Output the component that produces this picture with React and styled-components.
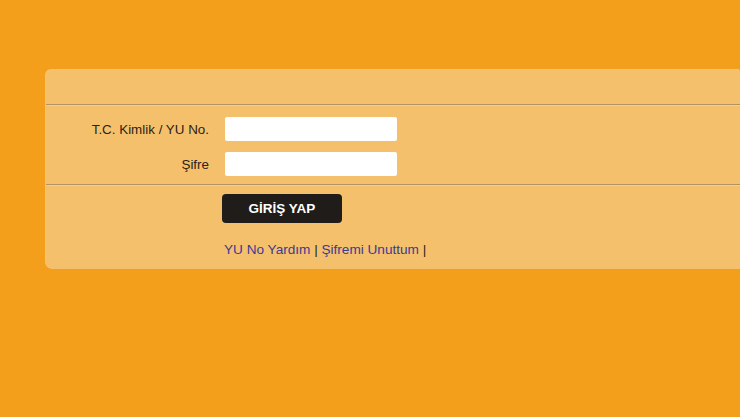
import { createGlobalStyle, styled } from "styled-components";

const GlobalStyle = createGlobalStyle`
  html, body {
    margin: 0;
    padding: 0;
    background: #f39f1b;
    font-family: "Liberation Sans", Arial, sans-serif;
  }
  body {
    height: 417px;
    overflow: hidden;
  }
`;

const Page = styled.div`
  padding: 70px 0 0 46px;
`;

const Panel = styled.div`
  background: #f5c06c;
  border-radius: 6px 0 0 6px;
  box-shadow: -1px -1px 0 rgba(255, 220, 150, 0.6);
  height: 199px;
  display: flex;
  flex-direction: column;
`;

const Header = styled.div`
  height: 34px;
  border-bottom: 1px solid #b39164;
  box-shadow: 0 1px 0 #f8cf8a;
`;

const Fields = styled.div`
  display: grid;
  grid-template-columns: 163px 172px;
  column-gap: 16px;
  row-gap: 11px;
  align-items: center;
  padding: 12px 0 8px;
  border-bottom: 1px solid #b39164;
  box-shadow: 0 1px 0 #f8cf8a;
`;

const Label = styled.label`
  text-align: right;
  font-size: 13.4px;
  color: #2b2218;
`;

const Input = styled.input`
  box-sizing: border-box;
  width: 172px;
  height: 24px;
  border: none;
  border-radius: 2px;
  background: #fff;
  outline: none;
`;

const Actions = styled.div`
  padding: 9px 0 0 176px;
  display: flex;
  flex-direction: column;
  align-items: flex-start;
`;

const SubmitButton = styled.button`
  width: 120px;
  height: 29px;
  border: none;
  border-radius: 4px;
  background: #1f1c1a;
  color: #fff;
  font-family: "Liberation Sans", Arial, sans-serif;
  font-weight: bold;
  font-size: 13.5px;
  cursor: pointer;
`;

const Links = styled.div`
  margin: 19px 0 0 2px;
  font-size: 13.6px;
  color: #2b2218;
`;

const LinkItem = styled.a`
  color: #3b3a96;
  text-decoration: none;
`;

export default function App() {
  return (
    <>
      <GlobalStyle />
      <Page>
        <Panel>
          <Header />
          <Fields>
            <Label htmlFor="tc">T.C. Kimlik / YU No.</Label>
            <Input id="tc" type="text" />
            <Label htmlFor="pw">Şifre</Label>
            <Input id="pw" type="password" />
          </Fields>
          <Actions>
            <SubmitButton>GİRİŞ YAP</SubmitButton>
            <Links>
              <LinkItem href="#">YU No Yardım</LinkItem> |{" "}
              <LinkItem href="#">Şifremi Unuttum</LinkItem> |
            </Links>
          </Actions>
        </Panel>
      </Page>
    </>
  );
}
